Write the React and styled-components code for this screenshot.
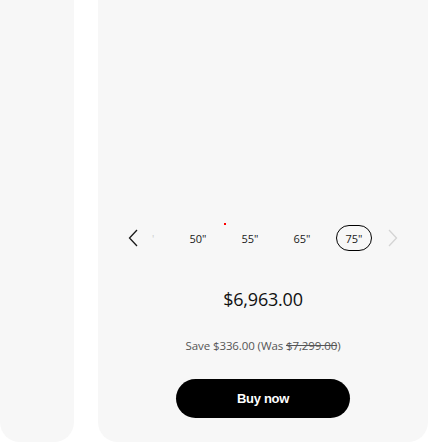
import React, { useState } from "react";
import styled, { createGlobalStyle } from "styled-components";

const GlobalStyle = createGlobalStyle`
  html, body {
    margin: 0;
    padding: 0;
    background: #ffffff;
  }
  body {
    font-family: "Open Sans", Arial, sans-serif;
  }
`;

const Page = styled.div`
  display: flex;
  gap: 24px;
  width: 448px;
  height: 448px;
  overflow: hidden;
`;

const Card = styled.div`
  flex: 0 0 ${(p) => p.$width}px;
  height: 442px;
  background: #f7f7f7;
  border-radius: 0 0 20px 20px;
  display: flex;
  flex-direction: column;
  align-items: center;
  justify-content: flex-end;
  padding-bottom: 24px;
  box-sizing: border-box;
`;

const SizeRow = styled.div`
  display: flex;
  align-items: center;
  width: 270px;
  margin-bottom: 34px;
`;

const Arrow = styled.button`
  flex: 0 0 10px;
  height: 18px;
  padding: 0;
  border: none;
  background: none;
  display: flex;
  align-items: center;
  justify-content: center;
  color: ${(p) => (p.$disabled ? "#d4d4d4" : "#1a1a1a")};
  cursor: pointer;
`;

const Viewport = styled.div`
  position: relative;
  flex: 0 0 226px;
  margin: 0 10px 0 14px;
  overflow: hidden;
  display: flex;
  justify-content: flex-end;
  gap: 16px;
  padding: 2px 6px 2px 0;
  box-sizing: border-box;
`;

const Chip = styled.button`
  flex: 0 0 36px;
  height: 26px;
  box-sizing: border-box;
  border: 1px solid ${(p) => (p.$active ? "#000" : "transparent")};
  border-radius: 13px;
  background: transparent;
  font-family: "Open Sans", Arial, sans-serif;
  font-size: 11px;
  color: ${(p) => (p.$faded ? "#cfcfcf" : "#1a1a1a")};
  padding: 0;
  cursor: pointer;
`;

const Dot = styled.span`
  position: absolute;
  left: 72px;
  top: 0;
  width: 2px;
  height: 2px;
  background: #f00;
`;

const Price = styled.div`
  font-family: "Open Sans", Arial, sans-serif;
  font-size: 18px;
  line-height: 24px;
  font-weight: 500;
  color: #111;
  letter-spacing: -0.2px;
  margin-bottom: 27px;
`;

const Save = styled.div`
  font-family: "Open Sans", Arial, sans-serif;
  font-size: 11.5px;
  line-height: 16px;
  color: #555;
  letter-spacing: -0.1px;
  margin-bottom: 25px;
`;

const Was = styled.s`
  color: #555;
`;

const BuyButton = styled.button`
  width: 174px;
  height: 39px;
  border: none;
  border-radius: 20px;
  background: #000;
  color: #fff;
  font-family: "Liberation Sans", Arial, sans-serif;
  font-weight: 700;
  font-size: 13px;
  letter-spacing: -0.3px;
  cursor: pointer;
`;

const Chevron = ({ dir }) => (
  <svg width="10" height="18" viewBox="0 0 10 18" fill="none">
    <path
      d={dir === "left" ? "M9 1 L1.5 9 L9 17" : "M1 1 L8.5 9 L1 17"}
      stroke="currentColor"
      strokeWidth="1.3"
    />
  </svg>
);

const sizes = ['43"', '50"', '55"', '65"', '75"'];

export default function App() {
  const [active, setActive] = useState('75"');

  return (
    <>
      <GlobalStyle />
      <Page>
        <Card $width={74} />
        <Card $width={330}>
          <SizeRow>
            <Arrow aria-label="Previous">
              <Chevron dir="left" />
            </Arrow>
            <Viewport>
              <Dot />
              {sizes.map((s, i) => (
                <Chip
                  key={s}
                  $active={active === s}
                  $faded={i === 0}
                  onClick={() => setActive(s)}
                >
                  {s}
                </Chip>
              ))}
            </Viewport>
            <Arrow $disabled aria-label="Next">
              <Chevron dir="right" />
            </Arrow>
          </SizeRow>
          <Price>$6,963.00</Price>
          <Save>
            Save $336.00 (Was <Was>$7,299.00</Was>)
          </Save>
          <BuyButton>Buy now</BuyButton>
        </Card>
      </Page>
    </>
  );
}
